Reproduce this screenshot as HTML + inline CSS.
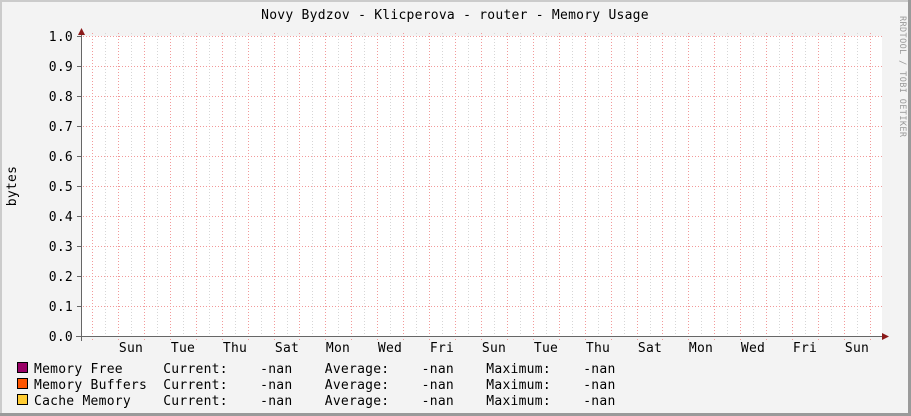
<!DOCTYPE html>
<html><head><meta charset="utf-8"><style>
html,body{margin:0;padding:0;background:#f3f3f3;}
svg{display:block;}
text{font-family:"DejaVu Sans Mono","Liberation Mono",monospace;font-size:13px;fill:#000;letter-spacing:0.25px;}
</style></head><body>
<svg width="911" height="416" viewBox="0 0 911 416" xmlns="http://www.w3.org/2000/svg">
<rect x="0" y="0" width="911" height="416" fill="#f3f3f3"/>
<rect x="0" y="0" width="911" height="2" fill="#cbcbcb"/>
<rect x="0" y="0" width="2" height="416" fill="#cbcbcb"/>
<rect x="0" y="413" width="911" height="3" fill="#9a9a9a"/>
<rect x="908" y="0" width="3" height="416" fill="#9a9a9a"/>
<rect x="81" y="36" width="801" height="300" fill="#ffffff"/>
<g stroke="#d6d6d6" stroke-width="1" stroke-dasharray="1,2">
<path d="M105.5 33V336M131.5 33V336M157.5 33V336M183.5 33V336M209.5 33V336M235.5 33V336M261.5 33V336M287.5 33V336M312.5 33V336M338.5 33V336M364.5 33V336M390.5 33V336M416.5 33V336M442.5 33V336M468.5 33V336M494.5 33V336M520.5 33V336M546.5 33V336M572.5 33V336M598.5 33V336M624.5 33V336M650.5 33V336M675.5 33V336M701.5 33V336M727.5 33V336M753.5 33V336M779.5 33V336M805.5 33V336M831.5 33V336M857.5 33V336"/>
</g>
<g stroke="#f29a9a" stroke-width="1" stroke-dasharray="1,2">
<path d="M92.5 33V340M118.5 33V340M144.5 33V340M170.5 33V340M196.5 33V340M222.5 33V340M248.5 33V340M274.5 33V340M299.5 33V340M325.5 33V340M351.5 33V340M377.5 33V340M403.5 33V340M429.5 33V340M455.5 33V340M481.5 33V340M507.5 33V340M533.5 33V340M559.5 33V340M585.5 33V340M611.5 33V340M637.5 33V340M662.5 33V340M688.5 33V340M714.5 33V340M740.5 33V340M766.5 33V340M792.5 33V340M818.5 33V340M844.5 33V340M870.5 33V340"/>
<path d="M77 36.5H882M77 66.5H882M77 96.5H882M77 126.5H882M77 156.5H882M77 186.5H882M77 216.5H882M77 246.5H882M77 276.5H882M77 306.5H882"/>
</g>
<g stroke="#666" stroke-width="1">
<path d="M81.5 34V341M76 336.5H882"/>
<path d="M77 36.5H81M77 66.5H81M77 96.5H81M77 126.5H81M77 156.5H81M77 186.5H81M77 216.5H81M77 246.5H81M77 276.5H81M77 306.5H81"/>
</g>
<path d="M78 35L81.5 28L85 35Z" fill="#8b1a1a"/>
<path d="M882 333L889 336.5L882 340Z" fill="#8b1a1a"/>
<text x="455" y="19" text-anchor="middle">Novy Bydzov - Klicperova - router - Memory Usage</text>
<g text-anchor="end">
<text x="73" y="41">1.0</text><text x="73" y="71">0.9</text><text x="73" y="101">0.8</text><text x="73" y="131">0.7</text><text x="73" y="161">0.6</text><text x="73" y="191">0.5</text><text x="73" y="221">0.4</text><text x="73" y="251">0.3</text><text x="73" y="281">0.2</text><text x="73" y="311">0.1</text><text x="73" y="341">0.0</text>
</g>
<text transform="translate(16,186) rotate(-90)" text-anchor="middle">bytes</text>
<text transform="translate(900,16) rotate(90)" style="font-size:8.5px;fill:#999;letter-spacing:0.4px">RRDTOOL / TOBI OETIKER</text>
<g text-anchor="middle">
<text x="131" y="352">Sun</text><text x="183" y="352">Tue</text><text x="235" y="352">Thu</text><text x="287" y="352">Sat</text><text x="338" y="352">Mon</text><text x="390" y="352">Wed</text><text x="442" y="352">Fri</text><text x="494" y="352">Sun</text><text x="546" y="352">Tue</text><text x="598" y="352">Thu</text><text x="650" y="352">Sat</text><text x="701" y="352">Mon</text><text x="753" y="352">Wed</text><text x="805" y="352">Fri</text><text x="857" y="352">Sun</text>
</g>
<rect x="17.5" y="362.5" width="10" height="10" fill="#990066" stroke="#000"/>
<rect x="17.5" y="378.5" width="10" height="10" fill="#ff5500" stroke="#000"/>
<rect x="17.5" y="394.5" width="10" height="10" fill="#ffcc33" stroke="#000"/>
<g>
<text x="34" y="373" xml:space="preserve">Memory Free     Current:    -nan    Average:    -nan    Maximum:    -nan</text>
<text x="34" y="389" xml:space="preserve">Memory Buffers  Current:    -nan    Average:    -nan    Maximum:    -nan</text>
<text x="34" y="405" xml:space="preserve">Cache Memory    Current:    -nan    Average:    -nan    Maximum:    -nan</text>
</g>
</svg>
</body></html>
